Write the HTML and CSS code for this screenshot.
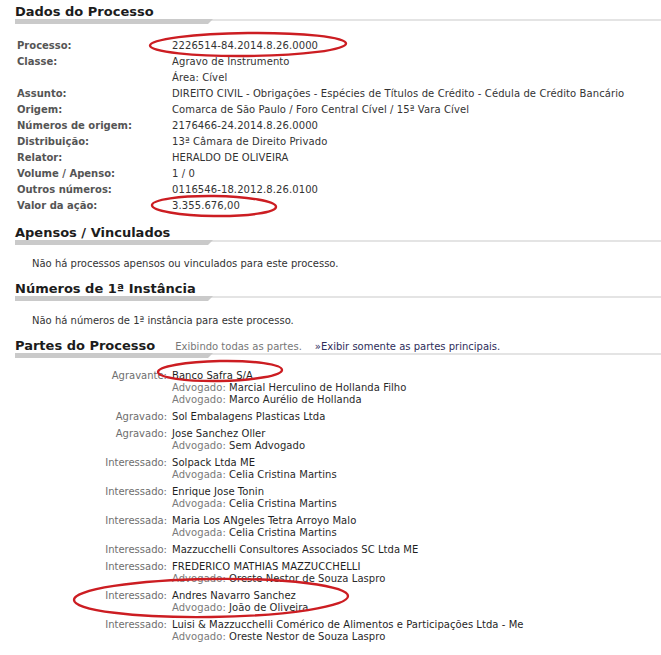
FILE: index.html
```html
<!DOCTYPE html>
<html lang="pt-BR">
<head>
<meta charset="utf-8">
<title>Dados do Processo</title>
<link rel="stylesheet" href="styles.css">
</head>
<body>
<div class="page">
  <section class="sec sec-dados">
    <h2 class="sec-title">Dados do Processo</h2>
    <div class="bar"><span class="bar-dark"></span></div>
    <dl class="dados">
      <dt>Processo:</dt><dd>2226514-84.2014.8.26.0000</dd>
      <dt>Classe:</dt><dd>Agravo de Instrumento</dd>
      <dt></dt><dd>Área: Cível</dd>
      <dt>Assunto:</dt><dd>DIREITO CIVIL - Obrigações - Espécies de Títulos de Crédito - Cédula de Crédito Bancário</dd>
      <dt>Origem:</dt><dd>Comarca de São Paulo / Foro Central Cível / 15ª Vara Cível</dd>
      <dt>Números de origem:</dt><dd>2176466-24.2014.8.26.0000</dd>
      <dt>Distribuição:</dt><dd>13ª Câmara de Direito Privado</dd>
      <dt>Relator:</dt><dd>HERALDO DE OLIVEIRA</dd>
      <dt>Volume / Apenso:</dt><dd>1 / 0</dd>
      <dt>Outros números:</dt><dd>0116546-18.2012.8.26.0100</dd>
      <dt>Valor da ação:</dt><dd>3.355.676,00</dd>
    </dl>
  </section>

  <section class="sec sec-apensos">
    <h2 class="sec-title">Apensos / Vinculados</h2>
    <div class="bar"><span class="bar-dark"></span></div>
    <p class="empty empty-apensos">Não há processos apensos ou vinculados para este processo.</p>
  </section>

  <section class="sec sec-numeros">
    <h2 class="sec-title">Números de 1ª Instância</h2>
    <div class="bar"><span class="bar-dark"></span></div>
    <p class="empty empty-numeros">Não há números de 1ª instância para este processo.</p>
  </section>

  <section class="sec sec-partes">
    <div class="partes-head">
      <h2 class="sec-title">Partes do Processo</h2>
      <span class="note">Exibindo todas as partes.</span>
      <a class="link">»Exibir somente as partes principais.</a>
    </div>
    <div class="bar"><span class="bar-dark"></span></div>
    <div class="partes">
      <div class="party">
        <span class="role">Agravante:</span>
        <div class="who">
          <div class="name">Banco Safra S/A</div>
          <div class="adv"><span class="adv-role">Advogado:</span> Marcial Herculino de Hollanda Filho</div>
          <div class="adv"><span class="adv-role">Advogado:</span> Marco Aurélio de Hollanda</div>
        </div>
      </div>
      <div class="party">
        <span class="role">Agravado:</span>
        <div class="who"><div class="name">Sol Embalagens Plasticas Ltda</div></div>
      </div>
      <div class="party">
        <span class="role">Agravado:</span>
        <div class="who">
          <div class="name">Jose Sanchez Oller</div>
          <div class="adv"><span class="adv-role">Advogado:</span> Sem Advogado</div>
        </div>
      </div>
      <div class="party">
        <span class="role">Interessado:</span>
        <div class="who">
          <div class="name">Solpack Ltda ME</div>
          <div class="adv"><span class="adv-role">Advogada:</span> Celia Cristina Martins</div>
        </div>
      </div>
      <div class="party">
        <span class="role">Interessado:</span>
        <div class="who">
          <div class="name">Enrique Jose Tonin</div>
          <div class="adv"><span class="adv-role">Advogada:</span> Celia Cristina Martins</div>
        </div>
      </div>
      <div class="party">
        <span class="role">Interessada:</span>
        <div class="who">
          <div class="name">Maria Los ANgeles Tetra Arroyo Malo</div>
          <div class="adv"><span class="adv-role">Advogada:</span> Celia Cristina Martins</div>
        </div>
      </div>
      <div class="party">
        <span class="role">Interessado:</span>
        <div class="who"><div class="name">Mazzucchelli Consultores Associados SC Ltda ME</div></div>
      </div>
      <div class="party">
        <span class="role">Interessado:</span>
        <div class="who">
          <div class="name">FREDERICO MATHIAS MAZZUCCHELLI</div>
          <div class="adv"><span class="adv-role">Advogado:</span> Oreste Nestor de Souza Laspro</div>
        </div>
      </div>
      <div class="party">
        <span class="role">Interessado:</span>
        <div class="who">
          <div class="name">Andres Navarro Sanchez</div>
          <div class="adv"><span class="adv-role">Advogado:</span> João de Oliveira</div>
        </div>
      </div>
      <div class="party">
        <span class="role">Interessado:</span>
        <div class="who">
          <div class="name">Luisi &amp; Mazzucchelli Comérico de Alimentos e Participações Ltda - Me</div>
          <div class="adv"><span class="adv-role">Advogado:</span> Oreste Nestor de Souza Laspro</div>
        </div>
      </div>
    </div>
  </section>

  <svg class="marks" viewBox="0 0 661 655" width="661" height="655" aria-hidden="true">
    <ellipse cx="248" cy="44.5" rx="98" ry="11.5" transform="rotate(-0.6 248 44.5)"/>
    <ellipse cx="214" cy="206" rx="62" ry="10" transform="rotate(0.8 214 206)"/>
    <ellipse cx="220" cy="371" rx="62" ry="10" transform="rotate(-1 220 371)"/>
    <ellipse cx="211" cy="598" rx="137" ry="19" transform="rotate(-0.8 211 598)"/>
  </svg>
</div>
</body>
</html>
```

FILE: styles.css
```css
html, body {
  margin: 0;
  padding: 0;
  background: #ffffff;
}

body {
  font-family: "DejaVu Sans", Verdana, sans-serif;
  font-size: 10px;
  color: #333333;
}

.page {
  position: relative;
  width: 661px;
  height: 655px;
  box-sizing: border-box;
  padding: 5px 0 0 15px;
  overflow: hidden;
}

.sec-title {
  margin: 0;
  font-size: 13px;
  line-height: 14px;
  font-weight: bold;
  color: #1c1c1c;
}

.bar {
  height: 5px;
  background: linear-gradient(#e4e4e4, #e4e4e4) top left / 100% 2px no-repeat;
}

.bar-dark {
  display: block;
  width: 198px;
  height: 5px;
  background: #cacaca;
  clip-path: polygon(0 0, 100% 0, calc(100% - 5px) 100%, 0 100%);
}

/* Dados do processo */
.dados {
  display: grid;
  grid-template-columns: 155px 1fr;
  margin: 14px 0 0 2px;
  line-height: 16px;
}

.dados dt {
  font-weight: bold;
  color: #555555;
}

.dados dd {
  margin: 0;
  color: #333333;
  white-space: nowrap;
  letter-spacing: 0.1px;
}

.sec-apensos { margin-top: 12px; }
.sec-numeros { margin-top: 10px; }
.sec-partes { margin-top: 10px; }

.empty {
  margin: 0;
  padding-left: 17px;
  line-height: 16px;
  color: #333333;
}

.empty-apensos { margin-top: 11px; }
.empty-numeros { margin-top: 12px; }

/* Partes */
.partes-head {
  display: flex;
  align-items: baseline;
}

.note {
  margin-left: 20px;
  color: #777777;
}

.link {
  margin-left: 13px;
  color: #2d2d5a;
  text-decoration: none;
}

.partes {
  margin-top: 12px;
  line-height: 12px;
}

.party {
  display: grid;
  grid-template-columns: 152px 1fr;
  column-gap: 5px;
  margin-bottom: 5px;
}

.role {
  text-align: right;
  color: #6e6e6e;
}

.name {
  color: #1f1f1f;
  white-space: nowrap;
  letter-spacing: 0.05px;
}

.adv {
  color: #2a2a2a;
  white-space: nowrap;
  letter-spacing: 0.05px;
}

.adv-role {
  color: #7a7a7a;
}

/* hand-drawn annotations over the page */
.marks {
  position: absolute;
  top: 0;
  left: 0;
  pointer-events: none;
}

.marks ellipse {
  fill: none;
  stroke: #cc1d22;
  stroke-width: 2.4;
}
```
